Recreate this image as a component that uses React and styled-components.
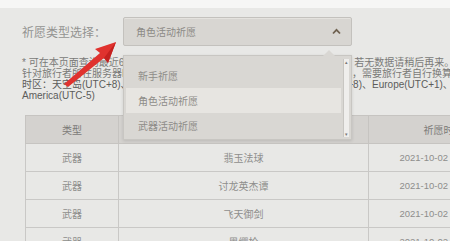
import React from "react";
import styled, { createGlobalStyle } from "styled-components";

const GlobalStyle = createGlobalStyle`
  html, body {
    margin: 0;
    padding: 0;
    background: #e8e8e6;
    overflow: hidden;
  }
  body {
    font-family: "Liberation Sans", "Noto Sans CJK SC", sans-serif;
    width: 450px;
    height: 241px;
  }
`;

const Page = styled.div`
  position: relative;
  width: 450px;
  height: 241px;
  overflow: hidden;
`;

const TopStrip = styled.div`
  height: 8px;
  background: #f6f6f5;
`;

const Content = styled.div`
  padding-left: 22px;
`;

const SelectRow = styled.div`
  display: flex;
  align-items: center;
  margin-top: 9px;
`;

const Label = styled.div`
  width: 101px;
  font-size: 12px;
  color: #939391;
  white-space: nowrap;
`;

const SelectBox = styled.div`
  box-sizing: border-box;
  width: 229px;
  height: 29px;
  display: flex;
  align-items: center;
  justify-content: space-between;
  padding: 0 10px 0 12px;
  background: #d8d6d2;
  border: 1px solid #c3c1bd;
  border-radius: 2px;
  box-shadow: inset 0 1px 0 #e4e2de;
  font-size: 10px;
  color: #8c8a86;
`;

const Chevron = styled.svg`
  width: 9px;
  height: 7px;
`;

const Notes = styled.div`
  margin-top: 11px;
  font-size: 10px;
  line-height: 11px;
`;

const NoteLine = styled.div`
  white-space: nowrap;
  color: ${(p) => (p.$dark ? "#5c5c5a" : "#7a7a78")};
`;

const Table = styled.table`
  margin-top: 14px;
  margin-left: 3px;
  border-collapse: collapse;
  table-layout: fixed;
  width: 493px;
  font-size: 10px;
`;

const Th = styled.th`
  height: 27px;
  padding: 0;
  background: #d4d2cf;
  border: 1px solid #c6c4c1;
  font-weight: normal;
  color: #7c7a78;
  text-align: center;
`;

const Td = styled.td`
  height: 27px;
  padding: 0;
  border: 1px solid #c9c8c6;
  color: #8e8e8c;
  text-align: center;
  font-size: ${(p) => (p.$date ? "9.5px" : "10px")};
  white-space: nowrap;
`;

const Popup = styled.div`
  position: absolute;
  left: 123px;
  top: 55px;
  width: 229px;
  height: 85px;
  box-sizing: border-box;
  background: #d9d7d3;
  border: 1px solid #c8c6c2;
  box-shadow: 0 1px 3px rgba(0, 0, 0, 0.12);
  display: flex;
  padding: 7px 0 0 2px;
`;

const Caret = styled.div`
  position: absolute;
  top: -6px;
  left: 199px;
  width: 0;
  height: 0;
  border-left: 6px solid transparent;
  border-right: 6px solid transparent;
  border-bottom: 6px solid #d9d7d3;
`;

const OptionList = styled.div`
  flex: 1;
  display: flex;
  flex-direction: column;
`;

const Option = styled.div`
  height: 25px;
  display: flex;
  align-items: center;
  padding-left: 12px;
  font-size: 10px;
  color: #8e8c88;
  background: ${(p) => (p.$active ? "#e7e5e1" : "transparent")};
`;

const Scrollbar = styled.div`
  width: 5px;
  margin: -4px 2px 2px 2px;
  background: #efeeec;
  border-left: 1px solid #c8c6c2;
  display: flex;
  flex-direction: column;
  justify-content: space-between;
  align-items: center;
  font-size: 5px;
  color: #777;
  line-height: 6px;
`;

const Arrow = styled.svg`
  position: absolute;
  left: 60px;
  top: 36px;
  width: 62px;
  height: 52px;
`;

const rows = [
  ["武器", "翡玉法球", "2021-10-02 18:26:53"],
  ["武器", "讨龙英杰谭", "2021-10-02 18:26:53"],
  ["武器", "飞天御剑", "2021-10-02 18:26:53"],
  ["武器", "黑缨枪", "2021-10-02 18:26:53"],
];

export default function App() {
  return (
    <Page>
      <GlobalStyle />
      <TopStrip />
      <Content>
        <SelectRow>
          <Label>祈愿类型选择：</Label>
          <SelectBox>
            <span>角色活动祈愿</span>
            <Chevron viewBox="0 0 9 7">
              <path d="M1 5.5 L4.5 1.8 L8 5.5" fill="none" stroke="#6f6250" strokeWidth="1.8" />
            </Chevron>
          </SelectBox>
        </SelectRow>
        <Notes>
          <NoteLine>
            * 可在本页面查询最近6个月的祈愿记录，祈愿记录可能存在约一小时延迟，若无数据请稍后再来。祈愿时间为
          </NoteLine>
          <NoteLine>
            针对旅行者所在服务器时区显示的时间，可能与旅行者的本地时间存在差异，需要旅行者自行换算。各服务器对应
          </NoteLine>
          <NoteLine $dark>
            时区：天空岛(UTC+8)、世界树(UTC+8), Asia(UTC+8)、TW,HK,MO(UTC+8)、Europe(UTC+1)、
          </NoteLine>
          <NoteLine $dark>America(UTC-5)</NoteLine>
        </Notes>
        <Table>
          <colgroup>
            <col style={{ width: 93 }} />
            <col style={{ width: 250 }} />
            <col style={{ width: 150 }} />
          </colgroup>
          <thead>
            <tr>
              <Th>类型</Th>
              <Th>名称</Th>
              <Th>祈愿时间</Th>
            </tr>
          </thead>
          <tbody>
            {rows.map((r, i) => (
              <tr key={i}>
                <Td>{r[0]}</Td>
                <Td>{r[1]}</Td>
                <Td $date>{r[2]}</Td>
              </tr>
            ))}
          </tbody>
        </Table>
      </Content>

      <Popup>
        <Caret />
        <OptionList>
          <Option>新手祈愿</Option>
          <Option $active>角色活动祈愿</Option>
          <Option>武器活动祈愿</Option>
        </OptionList>
        <Scrollbar>
          <span>▴</span>
          <span>▾</span>
        </Scrollbar>
      </Popup>

      <Arrow viewBox="0 0 62 52">
        <polygon
          points="4,48 8,51 44,22 48,27 56,6 35,13 40,17"
          fill="#e0322e"
        />
        <polygon points="44,22 48,27 56,6" fill="#c4211f" />
      </Arrow>
    </Page>
  );
}
